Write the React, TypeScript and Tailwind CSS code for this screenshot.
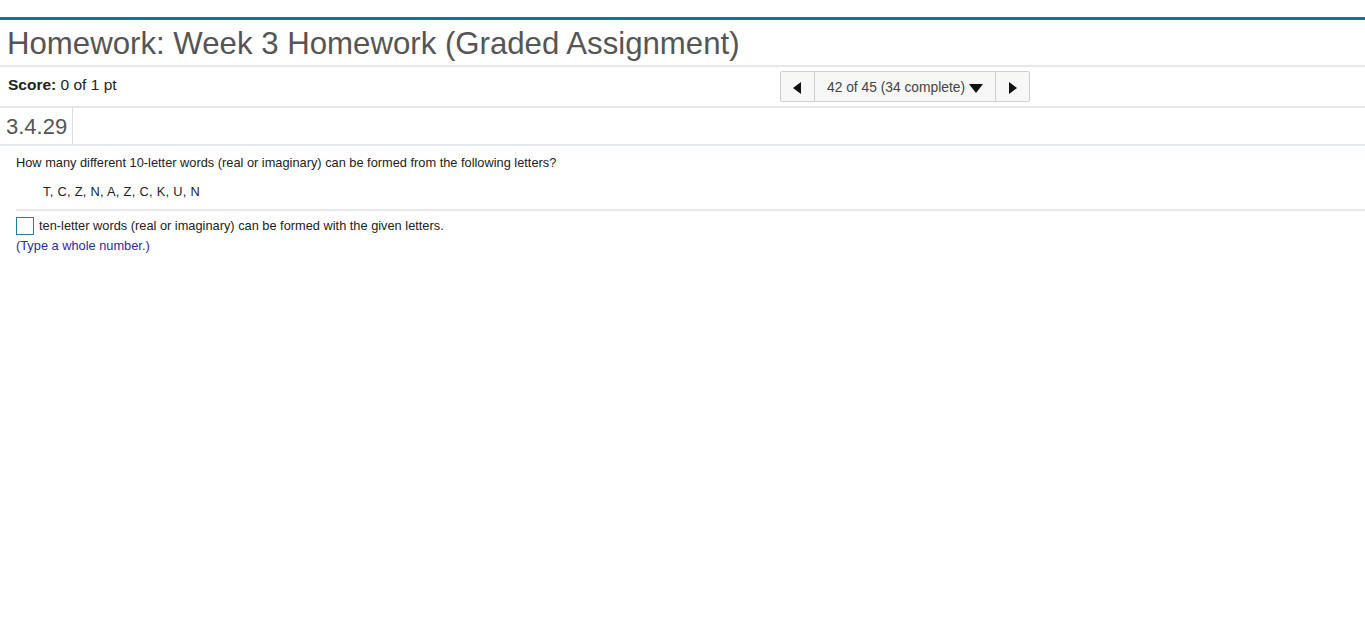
import React from 'react';

export default function App() {
  return (
    <div className="min-h-[621px] w-full bg-white font-['Liberation_Sans',Arial,sans-serif] text-[#222]">
      <div className="h-[17px]" />
      <div className="h-[3px] bg-[#0b78a1]" />

      {/* Title */}
      <div className="h-[47px] border-b-2 border-[#e4e8ee] pl-[7px] flex items-center">
        <h1 className="text-[31.2px] leading-none text-[#555] pt-[2px]">
          Homework: Week 3 Homework (Graded Assignment)
        </h1>
      </div>

      {/* Score + navigator */}
      <div className="h-[41px] border-b-2 border-[#e4e8ee] flex items-center relative">
        <div className="pl-[8px] text-[15.5px] text-[#222] -mt-[3px]">
          <span className="font-bold">Score:</span> 0 of 1 pt
        </div>
        <div className="absolute left-[780px] top-[4px] flex h-[31px] border border-[#cfcfcf] rounded-[2px] bg-[#f7f7f7]">
          <button className="w-[34px] flex items-center justify-center border-r border-[#cfcfcf] pt-[2px]">
            <svg width="9" height="12" viewBox="0 0 9 12"><path d="M8 0 L0 6 L8 12 Z" fill="#111" /></svg>
          </button>
          <button className="w-[181px] flex items-center justify-center gap-[4px] border-r border-[#cfcfcf] text-[13.8px] text-[#444] pt-[3px]">
            <span>42 of 45 (34 complete)</span>
            <svg width="14" height="9" viewBox="0 0 14 9"><path d="M0 0 L14 0 L7 9 Z" fill="#111" /></svg>
          </button>
          <button className="w-[33px] flex items-center justify-center pt-[2px]">
            <svg width="9" height="12" viewBox="0 0 9 12"><path d="M1 0 L9 6 L1 12 Z" fill="#111" /></svg>
          </button>
        </div>
      </div>

      {/* Question number */}
      <div className="h-[38px] border-b-2 border-[#e4e8ee] flex">
        <div className="pl-[6px] pr-[5px] border-r border-[#d8dde5] flex items-center text-[22px] text-[#555]">
          3.4.29
        </div>
      </div>

      {/* Question body */}
      <div className="pt-[10px] pl-[16px] text-[12.8px] text-[#222]">
        <p className="leading-[14px]">
          How many different 10-letter words (real or imaginary) can be formed from the following letters?
        </p>
        <p className="pl-[27px] mt-[15px] leading-[14px] tracking-[0.3px]">T, C, Z, N, A, Z, C, K, U, N</p>
        <div className="mt-[10px] border-t-2 border-[#e4e8ee]" />
        <div className="mt-[6px] flex items-center gap-[5px]">
          <div className="w-[18px] h-[18px] border border-[#1f7ea4] bg-white" />
          <span className="leading-[14px]">ten-letter words (real or imaginary) can be formed with the given letters.</span>
        </div>
        <p className="leading-[14px] mt-[4px] text-[#2b2b9c]">(Type a whole number.)</p>
      </div>
    </div>
  );
}
